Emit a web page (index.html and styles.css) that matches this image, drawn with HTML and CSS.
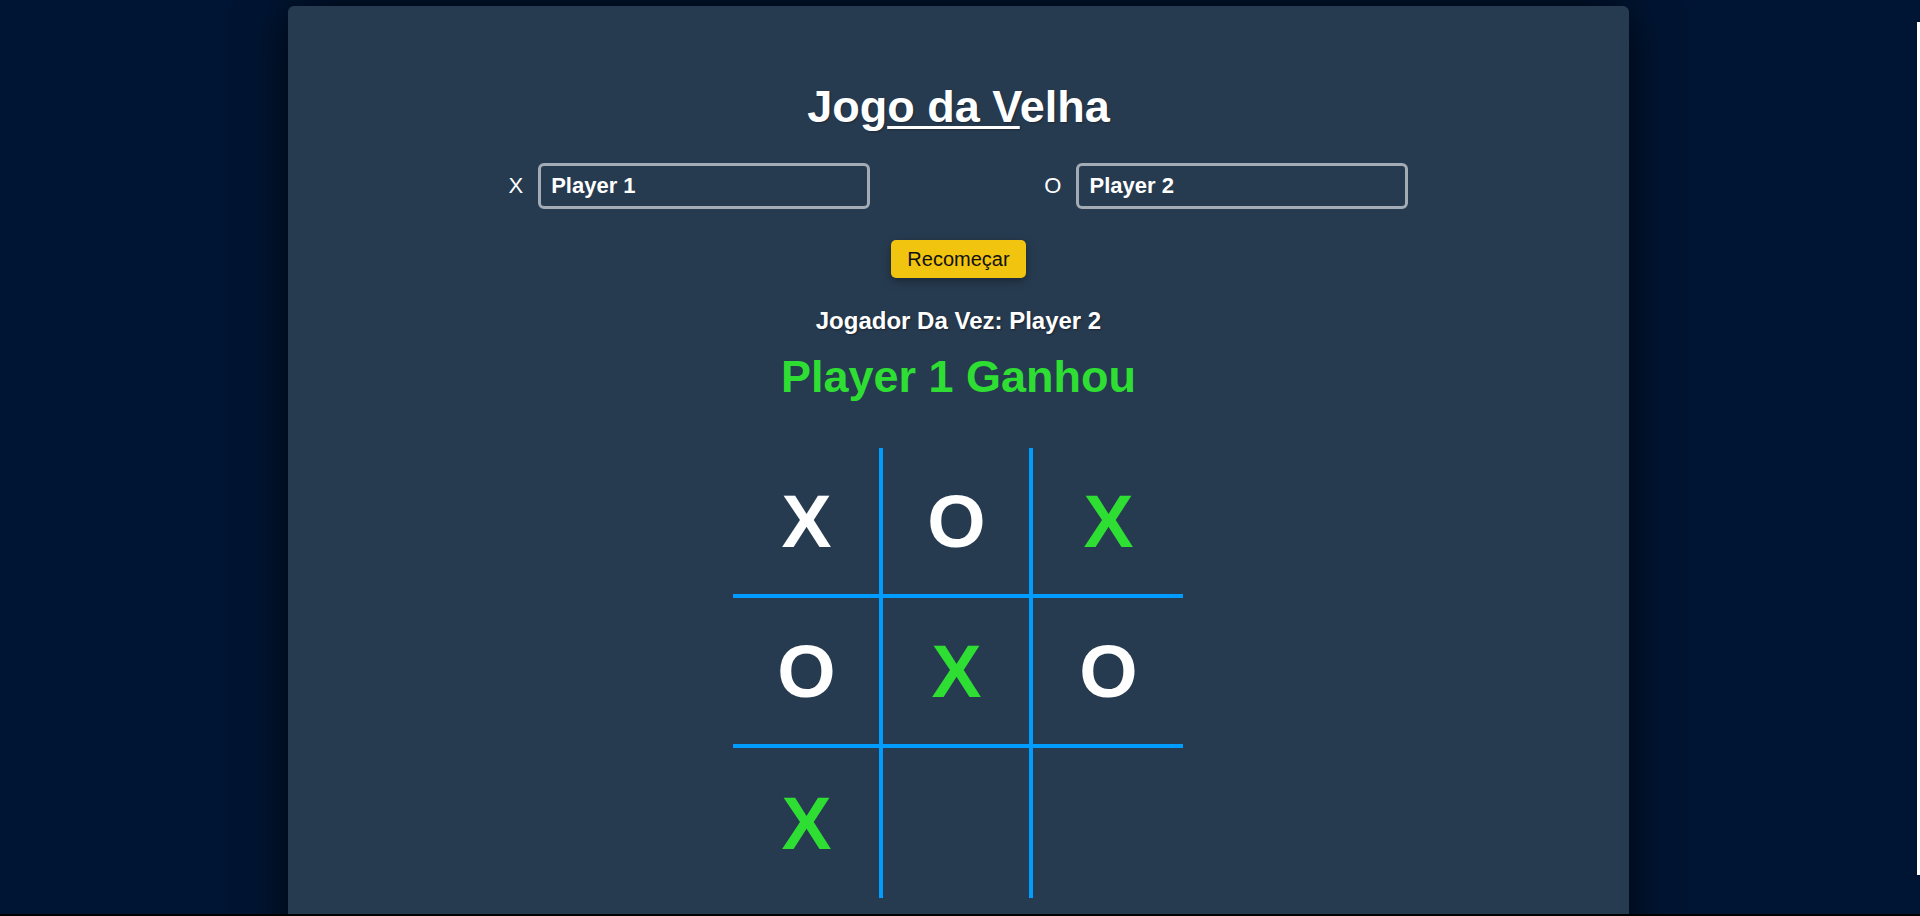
FILE: index.html
```html
<!DOCTYPE html>
<html lang="pt-BR">
<head>
<meta charset="utf-8">
<title>Jogo da Velha</title>
<link rel="stylesheet" href="styles.css">
</head>
<body>
  <div class="screen">
    <div class="viewport">
      <main class="card">
        <h1 class="title">Jog<u>o da V</u>elha</h1>
        <div class="players">
          <label class="player">
            <span class="mark-label">X</span>
            <input class="name" type="text" value="Player 1">
          </label>
          <label class="player">
            <span class="mark-label">O</span>
            <input class="name" type="text" value="Player 2">
          </label>
        </div>
        <button class="restart" type="button">Recomeçar</button>
        <p class="turn">Jogador Da Vez: Player 2</p>
        <p class="winner">Player 1 Ganhou</p>
        <div class="board">
          <div class="cell">X</div>
          <div class="cell">O</div>
          <div class="cell win">X</div>
          <div class="cell">O</div>
          <div class="cell win">X</div>
          <div class="cell">O</div>
          <div class="cell win">X</div>
          <div class="cell"></div>
          <div class="cell"></div>
        </div>
      </main>
    </div>
    <div class="scrolltrack"><div class="thumb"></div></div>
  </div>
  <div class="hbar"></div>
</body>
</html>
```

FILE: styles.css
```css
* { box-sizing: border-box; }

html, body {
  margin: 0;
  padding: 0;
  height: 916px;
  overflow: hidden;
  background: #001533;
  font-family: "Liberation Sans", Arial, sans-serif;
}

body {
  display: flex;
  flex-direction: column;
}

.screen {
  flex: 1;
  display: flex;
  min-height: 0;
}

.viewport {
  flex: 1;
  overflow: hidden;
  background: #001533;
}

.scrolltrack {
  width: 3px;
  background: #001533;
}

.thumb {
  margin-top: 22px;
  height: 853px;
  background: #ffffff;
}

.hbar {
  height: 2px;
  background: #000000;
}

.card {
  width: 70%;
  margin: 6px auto 0;
  height: 1100px;
  background: #273b50;
  border-radius: 6px;
  box-shadow: 0 0 50px rgba(0, 0, 0, 0.75);
  padding-top: 76px;
  display: flex;
  flex-direction: column;
  align-items: center;
  color: #ffffff;
}

.title {
  margin: 0;
  font-size: 45px;
  line-height: 50px;
  font-weight: 700;
  color: #ffffff;
  text-shadow: 1px 1px 2px rgba(0, 0, 0, 0.3);
}

.title u {
  text-decoration-thickness: 3px;
  text-underline-offset: 4px;
}

.players {
  margin-top: 31px;
  width: 900px;
  display: flex;
  justify-content: space-between;
  align-items: center;
}

.player {
  display: flex;
  align-items: center;
  gap: 15px;
}

.mark-label {
  font-size: 22px;
  line-height: 26px;
  color: #ffffff;
}

.name {
  width: 332px;
  height: 46px;
  border: 3px solid #a3abb4;
  border-radius: 6px;
  background: transparent;
  color: #ffffff;
  font-family: "Liberation Sans", Arial, sans-serif;
  font-size: 22px;
  font-weight: 700;
  padding: 0 10px;
  outline: none;
}

.restart {
  margin-top: 31px;
  height: 38px;
  padding: 0 16px;
  border: none;
  border-radius: 5px;
  background: #f1c40f;
  color: #111111;
  font-family: "Liberation Sans", Arial, sans-serif;
  font-size: 20px;
  box-shadow: 0 3px 10px rgba(0, 0, 0, 0.35);
}

.turn {
  margin: 29px 0 0;
  font-size: 24px;
  line-height: 28px;
  font-weight: 700;
  color: #ffffff;
  text-shadow: 1px 1px 2px rgba(0, 0, 0, 0.4);
}

.winner {
  margin: 17px 0 0;
  font-size: 45px;
  line-height: 50px;
  font-weight: 700;
  color: #2ede33;
}

.board {
  margin-top: 46px;
  display: grid;
  grid-template-columns: repeat(3, 150px);
  grid-template-rows: repeat(3, 150px);
}

.cell {
  display: flex;
  align-items: center;
  justify-content: center;
  font-size: 75px;
  line-height: 1;
  font-weight: 700;
  color: #ffffff;
}

.cell:not(:nth-child(3n)) {
  border-right: 4px solid #009cff;
}

.cell:nth-child(-n+6) {
  border-bottom: 4px solid #009cff;
}

.cell.win {
  color: #2ede33;
}
```
